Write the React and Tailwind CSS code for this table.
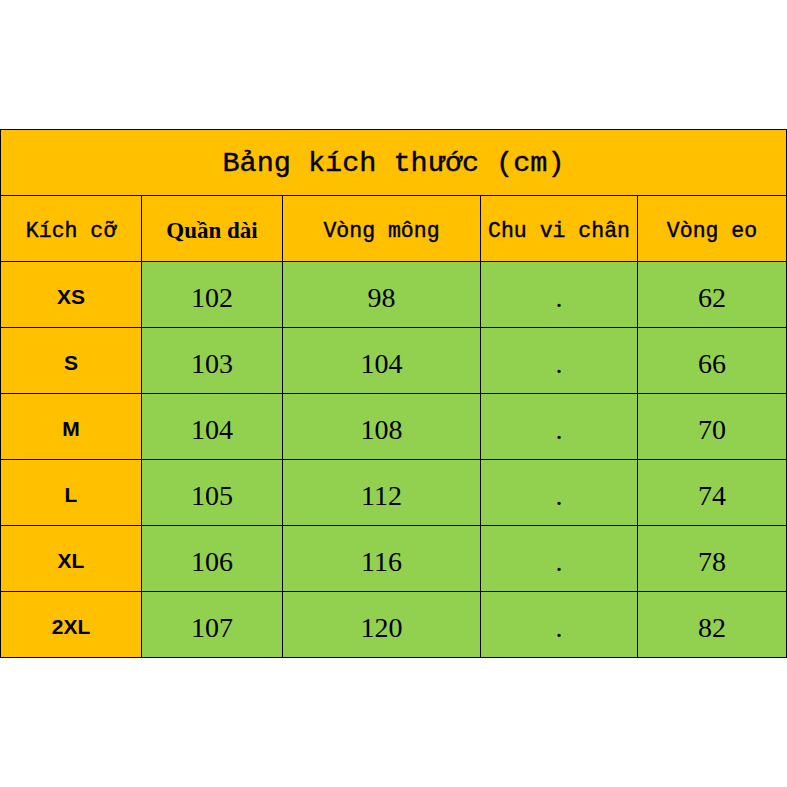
import React from 'react';

const rows = [
  ['XS', '102', '98', '.', '62'],
  ['S', '103', '104', '.', '66'],
  ['M', '104', '108', '.', '70'],
  ['L', '105', '112', '.', '74'],
  ['XL', '106', '116', '.', '78'],
  ['2XL', '107', '120', '.', '82'],
];

const mono = "font-['Liberation_Mono','Noto_Sans_CJK_SC',monospace] [-webkit-text-stroke:0.4px_black]";
const serif = "font-['Liberation_Serif',serif]";

export default function App() {
  return (
    <div className="w-[787px] h-[787px] bg-white pt-[129px]">
      <table className="w-[787px] border-collapse table-fixed text-black">
        <colgroup>
          <col className="w-[141px]" />
          <col className="w-[141px]" />
          <col className="w-[198px]" />
          <col className="w-[157px]" />
          <col />
        </colgroup>
        <tbody>
          <tr className="h-[66px]">
            <td colSpan={5} className={`border border-black bg-[#ffc000] text-center text-[28.5px] pt-1 ${mono}`}>
              Bảng kích thước (cm)
            </td>
          </tr>
          <tr className="h-[66px] bg-[#ffc000]">
            <td className={`border border-black text-center text-[21.5px] pt-[6px] ${mono}`}>Kích cỡ</td>
            <td className={`border border-black text-center text-[23px] font-bold pt-[6px] ${serif}`}>Quần dài</td>
            <td className={`border border-black text-center text-[21.5px] pt-[6px] ${mono}`}>Vòng mông</td>
            <td className={`border border-black text-center text-[21.5px] pt-[6px] ${mono}`}>Chu vi chân</td>
            <td className={`border border-black text-center text-[21.5px] pt-[6px] ${mono}`}>Vòng eo</td>
          </tr>
          {rows.map(([size, ...vals]) => (
            <tr key={size} className="h-[66px]">
              <td className="border border-black bg-[#ffc000] text-center text-[21px] font-bold pt-1 font-['Liberation_Sans',sans-serif]">
                {size}
              </td>
              {vals.map((v, i) => (
                <td key={i} className={`border border-black bg-[#92d050] text-center text-[28px] pt-[6px] ${serif}`}>
                  {v}
                </td>
              ))}
            </tr>
          ))}
        </tbody>
      </table>
    </div>
  );
}
